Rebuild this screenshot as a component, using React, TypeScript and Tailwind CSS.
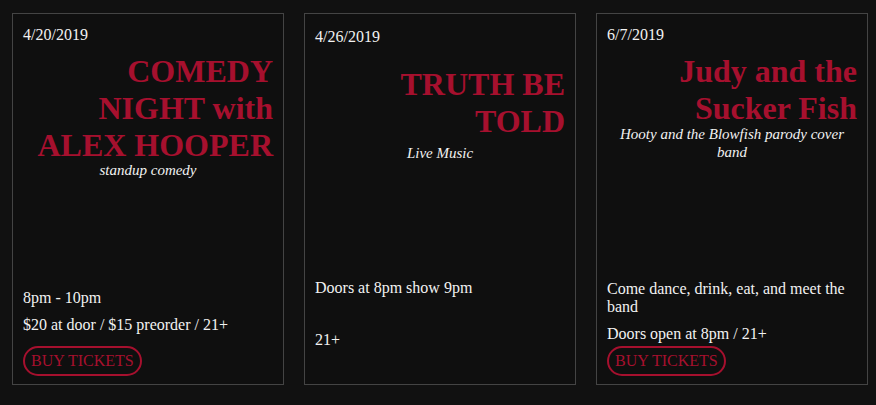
import React from 'react';

const CRIMSON = 'text-[#a6102e]';

function BuyButton() {
  return (
    <button className="self-start rounded-full border-2 border-[#a6102e] px-[6px] py-[4px] text-[16px] leading-[18.4px] uppercase text-[#a6102e] bg-transparent">
      Buy Tickets
    </button>
  );
}

export default function App() {
  return (
    <div className="min-h-[405px] w-full bg-[#111111] font-['Liberation_Serif',serif] text-[#f2f2f2] text-[16px] leading-[18.4px]">
      <div className="flex gap-[20px] pl-[12px] pt-[13px]">
        {/* Card 1 */}
        <div className="flex h-[372px] w-[272px] flex-col border border-[#444444] bg-[#0f0f0f] px-[10px] pt-[12px] pb-[8px]">
          <p>4/20/2019</p>
          <h1 className={`mt-[9px] text-right text-[32px] font-bold leading-[36.8px] ${CRIMSON}`}>
            COMEDY NIGHT with ALEX HOOPER
          </h1>
          <p className="mt-[-2.5px] text-center text-[15px] italic leading-[18px]">standup comedy</p>
          <div className="mt-auto flex flex-col">
            <p>8pm - 10pm</p>
            <p className="mt-[8.3px]">$20 at door / $15 preorder / 21+</p>
            <div className="mt-[11px] flex">
              <BuyButton />
            </div>
          </div>
        </div>

        {/* Card 2 */}
        <div className="flex h-[372px] w-[272px] flex-col border border-[#444444] bg-[#0f0f0f] px-[10px] pt-[12px] pb-[8px]">
          <p className="mt-[2.4px]">4/26/2019</p>
          <h1 className={`mt-[19px] text-right text-[32px] font-bold leading-[36.8px] ${CRIMSON}`}>
            TRUTH BE TOLD
          </h1>
          <p className="mt-[4.3px] text-center text-[15px] italic leading-[18px]">Live Music</p>
          <div className="mt-auto flex flex-col pb-[26.5px]">
            <p>Doors at 8pm show 9pm</p>
            <p className="mt-[33.3px]">21+</p>
          </div>
        </div>

        {/* Card 3 */}
        <div className="flex h-[372px] w-[272px] flex-col border border-[#444444] bg-[#0f0f0f] px-[10px] pt-[12px] pb-[8px]">
          <p>6/7/2019</p>
          <h1 className={`mt-[9px] text-right text-[32px] font-bold leading-[36.8px] ${CRIMSON}`}>
            Judy and the Sucker Fish
          </h1>
          <p className="mt-[-2.5px] text-center text-[15px] italic leading-[18px]">
            Hooty and the Blowfish parody cover band
          </p>
          <div className="mt-auto flex flex-col">
            <p>Come dance, drink, eat, and meet the band</p>
            <p className="mt-[8.2px]">Doors open at 8pm / 21+</p>
            <div className="mt-[2.2px] flex">
              <BuyButton />
            </div>
          </div>
        </div>
      </div>
    </div>
  );
}
